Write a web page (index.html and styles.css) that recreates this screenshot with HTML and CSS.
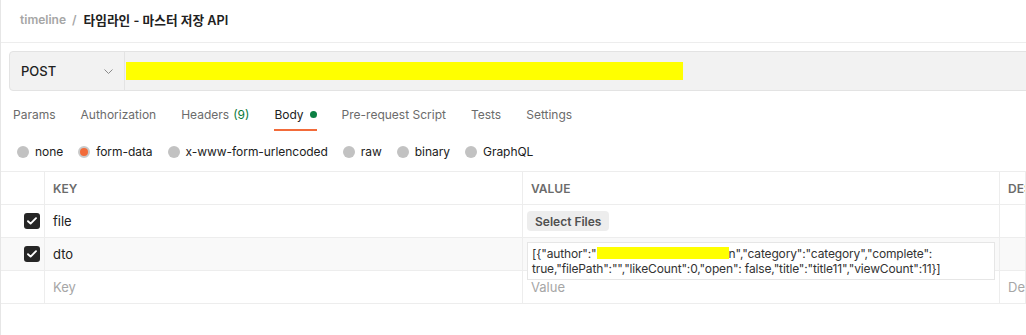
FILE: index.html
```html
<!DOCTYPE html>
<html lang="ko">
<head>
    <meta charset="UTF-8">
    <title>타임라인 - 마스터 저장 API</title>
    <link rel="stylesheet" href="styles.css">
</head>
<body>
<div class="app">
    <!-- Breadcrumb -->
    <header class="crumbs">
        <span class="crumb-parent">timeline</span>
        <span class="crumb-sep">/</span>
        <span class="crumb-title">타임라인 - 마스터 저장 API</span>
    </header>

    <!-- Method + URL -->
    <div class="url-bar">
        <div class="method">
            <span>POST</span>
            <svg class="chevron" width="9" height="5" viewBox="0 0 9 5"><path d="M0.5 0.5l4 4 4-4" fill="none" stroke="#8a8a8a" stroke-width="1"/></svg>
        </div>
        <div class="url-input">
            <span class="redacted url-redacted"></span>
        </div>
    </div>

    <!-- Request tabs -->
    <nav class="tabs">
        <span class="tab">Params</span>
        <span class="tab">Authorization</span>
        <span class="tab">Headers <span class="count">(9)</span></span>
        <span class="tab active">Body <span class="dot"></span></span>
        <span class="tab">Pre-request Script</span>
        <span class="tab">Tests</span>
        <span class="tab">Settings</span>
    </nav>

    <!-- Body type -->
    <div class="body-types">
        <label class="radio"><span class="circle"></span>none</label>
        <label class="radio selected"><span class="circle"></span>form-data</label>
        <label class="radio"><span class="circle"></span>x-www-form-urlencoded</label>
        <label class="radio"><span class="circle"></span>raw</label>
        <label class="radio"><span class="circle"></span>binary</label>
        <label class="radio"><span class="circle"></span>GraphQL</label>
    </div>

    <!-- Form data table -->
    <div class="kv-table">
        <div class="kv-row head">
            <div class="cell check"></div>
            <div class="cell">KEY</div>
            <div class="cell">VALUE</div>
            <div class="cell">DESCRIPTION</div>
        </div>
        <div class="kv-row">
            <div class="cell check"><span class="checkbox"><svg width="10" height="8" viewBox="0 0 10 8"><path d="M1 4.2l2.6 2.4L9 1.2" fill="none" stroke="#fff" stroke-width="1.9" stroke-linecap="round" stroke-linejoin="round"/></svg></span></div>
            <div class="cell">file</div>
            <div class="cell"><button class="select-files">Select Files</button></div>
            <div class="cell"></div>
        </div>
        <div class="kv-row hover">
            <div class="cell check"><span class="checkbox"><svg width="10" height="8" viewBox="0 0 10 8"><path d="M1 4.2l2.6 2.4L9 1.2" fill="none" stroke="#fff" stroke-width="1.9" stroke-linecap="round" stroke-linejoin="round"/></svg></span></div>
            <div class="cell">dto</div>
            <div class="cell value-cell">
                <div class="value-editor">[{"author":"<span class="redacted author-redacted"></span>n","category":"category","complete":<br>true,"filePath":"","likeCount":0,"open": false,"title":"title11","viewCount":11}]</div>
            </div>
            <div class="cell"></div>
        </div>
        <div class="kv-row">
            <div class="cell check"></div>
            <div class="cell placeholder">Key</div>
            <div class="cell placeholder">Value</div>
            <div class="cell placeholder">Description</div>
        </div>
    </div>
</div>
</body>
</html>
```

FILE: styles.css
```css
* {
    margin: 0;
    padding: 0;
    box-sizing: border-box;
}

html, body {
    width: 100%;
    height: 100%;
    overflow: hidden;
    background: #fff;
    font-family: Inter, "Noto Sans CJK KR", sans-serif;
    font-size: 12px;
    color: #212121;
}

.app {
    height: 100%;
    border-left: 1px solid #e6e6e6;
}

/* Breadcrumb */
.crumbs {
    height: 43px;
    border-bottom: 1px solid #ededed;
    display: flex;
    align-items: center;
    padding: 0 0 4px 19px;
    font-size: 12px;
    font-weight: 600;
}

.crumb-parent {
    color: #a6a6a6;
}

.crumb-sep {
    color: #a6a6a6;
    margin: 0 7px 0 6px;
}

.crumb-title {
    color: #212121;
    font-size: 12.7px;
}

/* URL bar */
.url-bar {
    display: flex;
    height: 40px;
    margin: 8px -10px 0 8px;
    background: #f2f2f2;
    border: 1px solid #e3e3e3;
    border-radius: 4px;
}

.method {
    width: 115px;
    display: flex;
    align-items: center;
    justify-content: space-between;
    padding: 0 11px 0 11px;
    border-right: 1px solid #e3e3e3;
    font-size: 13px;
    font-weight: 500;
    color: #212121;
}

.url-input {
    flex: 1;
    display: flex;
    align-items: center;
    padding-left: 1px;
}

.redacted {
    display: inline-block;
    background: #ffff00;
}

.url-redacted {
    width: 557px;
    height: 18px;
}

/* Tabs */
.tabs {
    display: flex;
    gap: 25px;
    padding: 0 0 0 12px;
    margin-top: 12px;
    height: 28px;
}

.tab {
    color: #6b6b6b;
    border-bottom: 2px solid transparent;
    padding-top: 4px;
    display: flex;
    align-items: flex-start;
    gap: 4px;
}

.tab .count {
    color: #0b7a3b;
}

.tab.active {
    color: #212121;
    border-bottom-color: #f26b3a;
}

.dot {
    width: 7px;
    height: 7px;
    border-radius: 50%;
    background: #0b8043;
    margin: 4px 0 0 2px;
}

/* Body type radios */
.body-types {
    display: flex;
    gap: 15px;
    padding: 12px 0 0 16px;
    height: 40px;
}

.radio {
    display: flex;
    align-items: center;
    gap: 6px;
    color: #212121;
    height: 17px;
    letter-spacing: -0.05px;
}

.circle {
    width: 12px;
    height: 12px;
    border-radius: 50%;
    background: #c2c2c2;
    display: inline-block;
}

.radio.selected .circle {
    background: #f26b3a;
    border: 2px solid #c9c9c9;
}

/* Key/value table */
.kv-table {
    border-top: 1px solid #ededed;
    font-size: 13px;
}

.kv-row {
    display: grid;
    grid-template-columns: 44px 478px 477px 1fr;
    height: 33px;
    border-bottom: 1px solid #ededed;
}

.kv-row.hover {
    background: #f9f9f9;
}

.cell {
    border-right: 1px solid #ededed;
    display: flex;
    align-items: center;
    padding-left: 8px;
    white-space: nowrap;
    overflow: hidden;
}

.head .cell {
    font-size: 12px;
    font-weight: 600;
    color: #6b6b6b;
}

.cell.check {
    justify-content: flex-end;
    padding: 0 4px 0 0;
}

.checkbox {
    width: 16px;
    height: 16px;
    border-radius: 3px;
    background: #262626;
    display: flex;
    align-items: center;
    justify-content: center;
}

.placeholder {
    color: #a6a6a6;
}

.select-files {
    font-family: inherit;
    font-size: 12px;
    font-weight: 600;
    color: #505050;
    background: #ededed;
    border: none;
    border-radius: 4px;
    height: 20px;
    padding: 0 8px;
    margin-left: -4px;
}

.value-cell {
    position: relative;
    overflow: visible;
}

/* expanded value editor overlapping the next row */
.value-editor {
    position: absolute;
    left: 4px;
    top: 4px;
    width: 468px;
    height: 38px;
    background: #fff;
    border: 1px solid #e6e6e6;
    padding: 3px 4px;
    font-size: 12px;
    line-height: 15px;
    letter-spacing: -0.15px;
    color: #333;
    z-index: 2;
}

.author-redacted {
    width: 132px;
    height: 12px;
    vertical-align: -1px;
}
```
